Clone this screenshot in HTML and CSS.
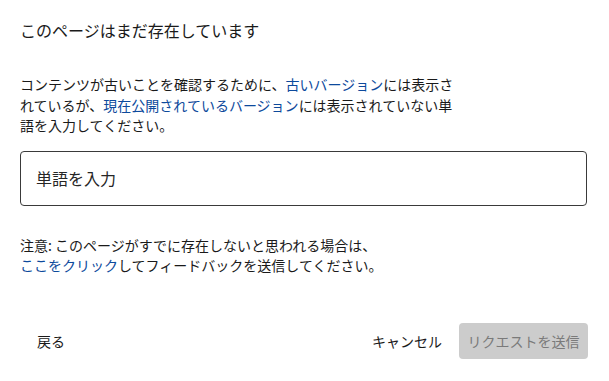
FILE: index.html
```html
<!DOCTYPE html>
<html lang="ja">
<head>
<meta charset="utf-8">
<title>このページはまだ存在しています</title>
<link rel="stylesheet" href="styles.css">
</head>
<body>
<div class="dialog">
  <h1 class="title">このページはまだ存在しています</h1>
  <p class="desc">コンテンツが古いことを確認するために、<a class="link" href="#">古いバージョン</a>には表示さ<br>れているが、<a class="link" href="#">現在公開されているバージョン</a>には表示されていない単<br>語を入力してください。</p>
  <input class="word-input" type="text" placeholder="単語を入力">
  <p class="note">注意: このページがすでに存在しないと思われる場合は、<br><a class="link" href="#">ここをクリック</a>してフィードバックを送信してください。</p>
  <div class="footer">
    <button class="btn btn-back" type="button">戻る</button>
    <div class="actions">
      <button class="btn btn-cancel" type="button">キャンセル</button>
      <button class="btn btn-submit" type="button" disabled>リクエストを送信</button>
    </div>
  </div>
</div>
</body>
</html>
```
FILE: styles.css
```css
html, body {
  margin: 0;
  padding: 0;
  background: #ffffff;
}
body {
  font-family: "Noto Sans CJK JP", "Noto Sans", "Liberation Sans", sans-serif;
  color: #1a1a1a;
}
.dialog {
  width: 609px;
  height: 381px;
  box-sizing: border-box;
  padding: 18px 21px 0 20px;
  display: flex;
  flex-direction: column;
}
.title {
  margin: 0;
  font-size: 16px;
  font-weight: 400;
  line-height: 24px;
}
.desc {
  margin: 32px 0 0 0;
  font-size: 14px;
  line-height: 20.5px;
}
.link {
  color: #0d4a9c;
  text-decoration: none;
}
.word-input {
  margin-top: 15px;
  height: 55px;
  box-sizing: border-box;
  width: 567px;
  border: 1px solid #3a3a3a;
  border-radius: 4px;
  padding: 0 15px;
  font-family: inherit;
  font-size: 16px;
  color: #1a1a1a;
  outline: none;
  background: #fff;
}
.word-input::placeholder {
  color: #262626;
  opacity: 1;
}
.note {
  margin: 29px 0 0 0;
  font-size: 14px;
  line-height: 20.5px;
}
.footer {
  margin-top: 47px;
  display: flex;
  justify-content: space-between;
  align-items: center;
}
.actions {
  display: flex;
  align-items: center;
  gap: 17px;
}
.btn {
  font-family: inherit;
  font-size: 14px;
  line-height: 20px;
  border: none;
  background: transparent;
  color: #1a1a1a;
  padding: 0;
  height: 36px;
  border-radius: 4px;
  cursor: pointer;
}
.btn-back {
  margin-left: 17px;
}
.btn-submit {
  width: 129px;
  padding: 0 8px;
  background: #cccccc;
  color: #7a7a7a;
  cursor: default;
}
```
